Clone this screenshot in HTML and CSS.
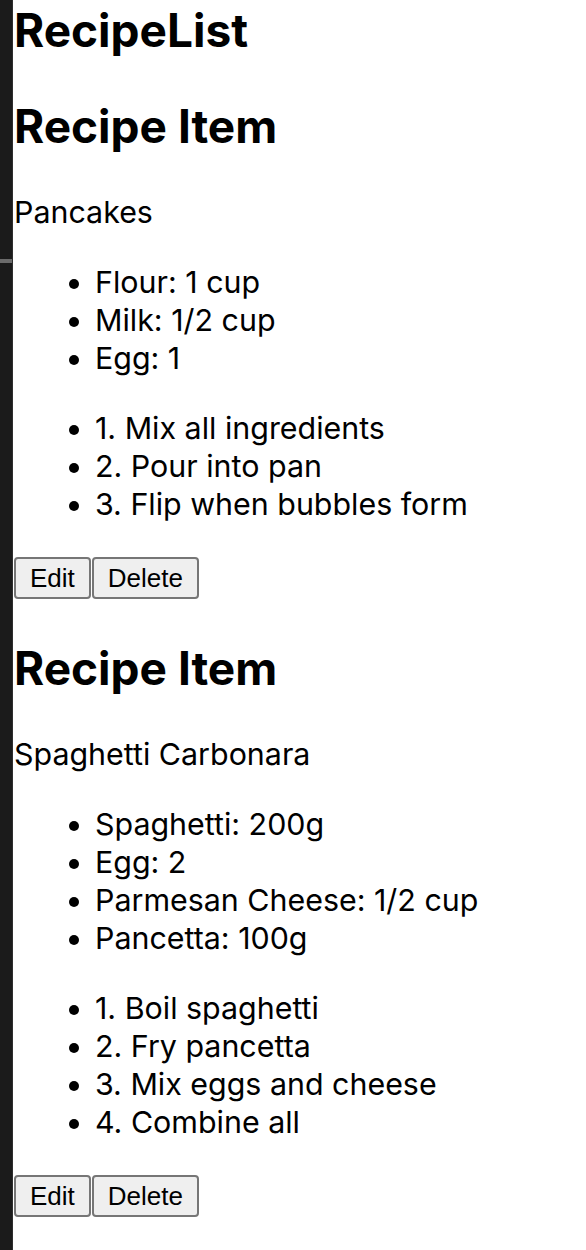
FILE: index.html
```html
<!DOCTYPE html>
<html>
<head>
<meta charset="utf-8">
<link rel="stylesheet" href="styles.css">
</head>
<body>
<div class="frame">
  <div class="strip"></div>
  <div class="content">
    <h1 class="title">RecipeList</h1>
    <div class="recipe">
      <h2 class="recipe-title">Recipe Item</h2>
      <p class="recipe-name">Pancakes</p>
      <ul class="list">
        <li>Flour: 1 cup</li>
        <li>Milk: 1/2 cup</li>
        <li>Egg: 1</li>
      </ul>
      <ul class="list">
        <li>1. Mix all ingredients</li>
        <li>2. Pour into pan</li>
        <li>3. Flip when bubbles form</li>
      </ul>
      <div class="actions">
        <button class="btn">Edit</button>
        <button class="btn">Delete</button>
      </div>
    </div>
    <div class="recipe">
      <h2 class="recipe-title">Recipe Item</h2>
      <p class="recipe-name">Spaghetti Carbonara</p>
      <ul class="list">
        <li>Spaghetti: 200g</li>
        <li>Egg: 2</li>
        <li>Parmesan Cheese: 1/2 cup</li>
        <li>Pancetta: 100g</li>
      </ul>
      <ul class="list">
        <li>1. Boil spaghetti</li>
        <li>2. Fry pancetta</li>
        <li>3. Mix eggs and cheese</li>
        <li>4. Combine all</li>
      </ul>
      <div class="actions">
        <button class="btn">Edit</button>
        <button class="btn">Delete</button>
      </div>
    </div>
  </div>
</div>
</body>
</html>
```
FILE: styles.css
```css
html, body {
  margin: 0;
  padding: 0;
  background: #ffffff;
}
body {
  font-family: Inter, "Noto Sans", sans-serif;
  color: #000000;
  font-size: 30.4px;
  line-height: 38px;
}
.frame {
  display: flex;
  min-height: 1250px;
}
.strip {
  width: 12px;
  flex: none;
  border-right: 1px solid #2e2e2e;
  background: linear-gradient(to bottom, #1b1b1b 0, #1b1b1b 259px, #6b6b6b 259px, #6b6b6b 263px, #1b1b1b 263px);
}
.content {
  padding-left: 1px;
  display: flex;
  flex-direction: column;
}
.title {
  font-size: 46px;
  line-height: 53px;
  font-weight: 700;
  margin: 4px 0 0 0;
}
.recipe {
  display: flex;
  flex-direction: column;
}
.recipe-title {
  font-size: 46px;
  line-height: 58px;
  font-weight: 700;
  margin: 40px 0 38px 0;
}
.recipe-name {
  margin: 0;
}
.list {
  margin: 32px 0 0 0;
  padding-left: 81px;
}
.actions {
  display: flex;
  gap: 1px;
  margin-top: 34px;
}
.btn {
  font-family: "Liberation Sans", Arial, sans-serif;
  font-size: 26px;
  height: 42px;
  padding: 0 14px;
  border: 2px solid #767676;
  border-radius: 4px;
  background: #efefef;
  color: #000000;
}
```
